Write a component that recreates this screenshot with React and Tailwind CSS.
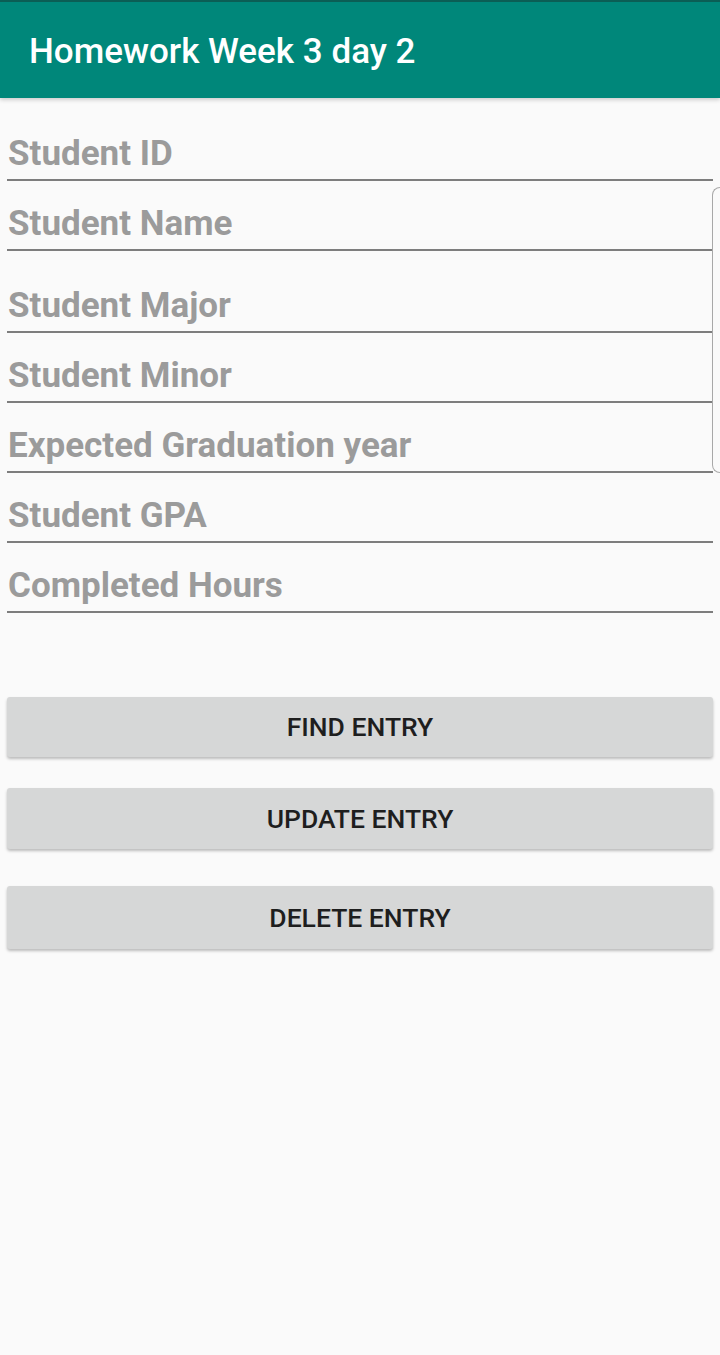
export default function App() {
  const fields = [
    { label: "Student ID", mt: "mt-[13px]" },
    { label: "Student Name", mt: "mt-0" },
    { label: "Student Major", mt: "mt-[12px]" },
    { label: "Student Minor", mt: "mt-0" },
    { label: "Expected Graduation year", mt: "mt-0" },
    { label: "Student GPA", mt: "mt-0" },
    { label: "Completed Hours", mt: "mt-0" },
  ];
  return (
    <div className="relative w-[720px] h-[1355px] bg-[#fafafa] overflow-hidden" style={{ fontFamily: "Roboto, 'Noto Sans', sans-serif" }}>
      <div className="h-[98px] bg-[#00877a] border-t-2 border-[#0b5e55] flex items-center pl-[29px] shadow-[0_2px_4px_rgba(0,0,0,0.18)]">
        <span className="text-white text-[35px] font-medium leading-none mt-[3px]">Homework Week 3 day 2</span>
      </div>
      <div className="px-[7px]">
        {fields.map((f) => (
          <div key={f.label} className={`${f.mt} h-[70px] border-b-2 border-[#7d7d7d] flex items-end pb-[5px]`}>
            <span className="text-[35px] font-bold leading-[40px] text-[#9b9b9b] pl-[1px]">{f.label}</span>
          </div>
        ))}
        <div className="mt-[84px] flex flex-col">
          <button className="h-[60px] w-full bg-[#d6d7d7] rounded-[3px] shadow-[0_2px_3px_rgba(0,0,0,0.25)] text-[26.5px] font-medium text-[#1e1e1e] flex items-center justify-center">FIND ENTRY</button>
          <button className="mt-[31px] h-[61px] w-full bg-[#d6d7d7] rounded-[3px] shadow-[0_2px_3px_rgba(0,0,0,0.25)] text-[26.5px] font-medium text-[#1e1e1e] flex items-center justify-center">UPDATE ENTRY</button>
          <button className="mt-[37px] h-[63px] w-full bg-[#d6d7d7] rounded-[3px] shadow-[0_2px_3px_rgba(0,0,0,0.25)] text-[26.5px] font-medium text-[#1e1e1e] flex items-center justify-center">DELETE ENTRY</button>
        </div>
      </div>
      <div className="absolute right-0 top-[187px] h-[286px] w-[8px] border border-r-0 border-[#a8a8a8] rounded-l-[8px]" />
    </div>
  );
}
